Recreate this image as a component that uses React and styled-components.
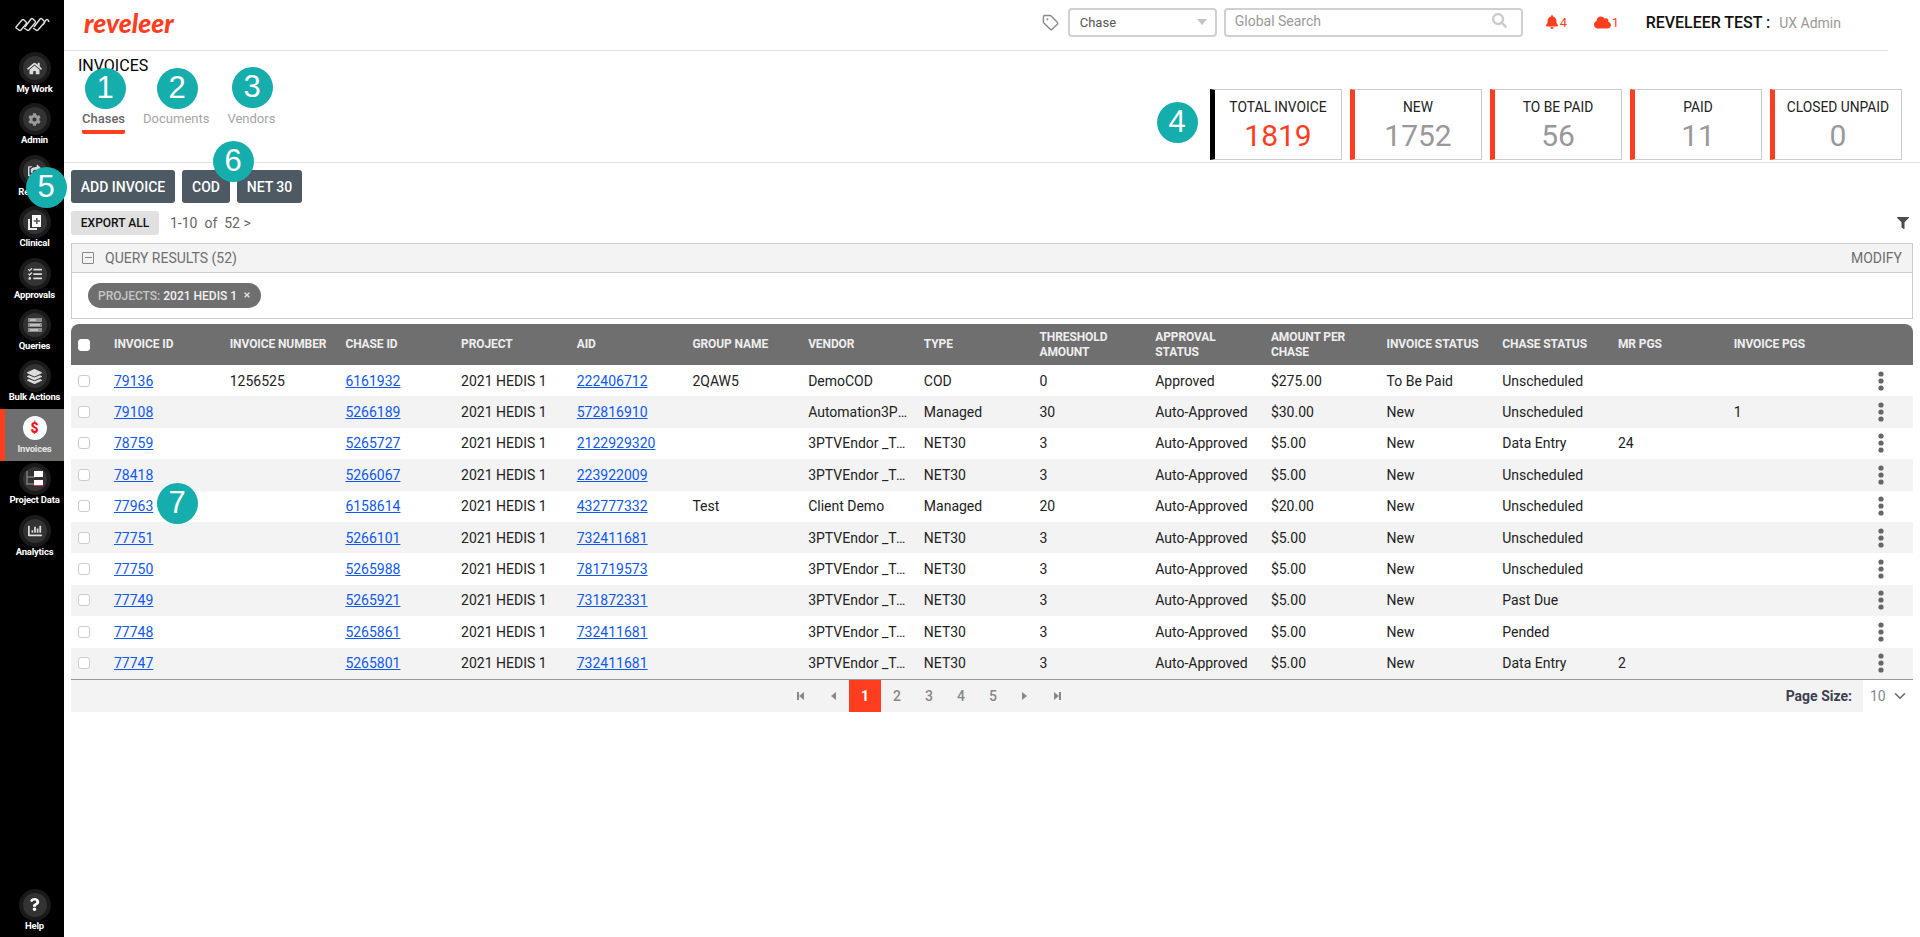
import styled, { createGlobalStyle } from "styled-components";
import { FaHome, FaCog, FaShareSquare, FaTasks, FaLayerGroup, FaChartBar, FaQuestion, FaBell, FaCloud, FaSearch, FaFilter, FaTimes } from "react-icons/fa";
import { LuTag, LuChevronDown } from "react-icons/lu";

const GlobalStyle = createGlobalStyle`
  html, body { margin: 0; padding: 0; background: #fff; }
  body { font-family: Roboto, "Liberation Sans", sans-serif; overflow: hidden; }
  * { box-sizing: border-box; }
`;

const Page = styled.div`
  position: relative;
  display: flex;
  width: 1920px;
  height: 937px;
  overflow: hidden;
`;

const Sidebar = styled.nav`
  width: 64px;
  flex: none;
  height: 100%;
  background: #000;
  display: flex;
  flex-direction: column;
`;

const SideLogo = styled.div`
  height: 49px;
  flex: none;
  display: flex;
  align-items: flex-start;
  justify-content: center;
  padding-top: 16px;
`;

const SideItem = styled.div`
  height: ${(p) => (p.$active ? "52px" : "51.4px")};
  margin-bottom: ${(p) => (p.$active ? "-0.6px" : "0")};
  margin-top: ${(p) => (p.$bottom ? "auto" : "0")};
  padding-top: 3px;
  padding-left: ${(p) => (p.$active ? "0" : "5px")};
  flex: none;
  display: flex;
  flex-direction: column;
  align-items: center;
  background: ${(p) => (p.$active ? "#6f6f6f" : "transparent")};
  border-left: ${(p) => (p.$active ? "5px solid #ff3d1f" : "0")};
`;

const SideCircle = styled.div`
  width: 32px;
  height: 32px;
  flex: none;
  border-radius: 50%;
  background: ${(p) => (p.$active ? "transparent" : "#1a1a1a")};
  display: flex;
  align-items: center;
  justify-content: center;
`;

const SideInner = styled.div`
  width: 24px;
  height: 24px;
  border-radius: 50%;
  background: ${(p) => (p.$active ? "#fff" : "#333")};
  color: ${(p) => (p.$active ? "#f01818" : "#dcdcdc")};
  font-size: 14px;
  font-weight: 900;
  display: flex;
  align-items: center;
  justify-content: center;
`;

const SideLabel = styled.span`
  font-size: 9.5px;
  line-height: 12px;
  font-weight: 700;
  letter-spacing: -0.2px;
  color: ${(p) => (p.$active ? "#e6e6e6" : "#fff")};
  white-space: nowrap;
  margin-top: -1px;
`;

const Main = styled.div`
  flex: 1;
  min-width: 0;
  display: flex;
  flex-direction: column;
`;

const TopBar = styled.header`
  height: 51px;
  flex: none;
  margin-right: 32px;
  border-bottom: 1px solid #e2e2e2;
  display: flex;
  align-items: flex-start;
  padding-left: 20px;
`;

const Logo = styled.div`
  font-family: Lato, "Open Sans", sans-serif;
  font-size: 26.5px;
  line-height: 30px;
  font-weight: 900;
  font-style: italic;
  color: #ff3d1f;
  margin-top: 8px;
`;

const TopTools = styled.div`
  margin-left: auto;
  display: flex;
  align-items: center;
  height: 44px;
`;

const TagIcon = styled(LuTag)`
  width: 17px;
  height: 17px;
  color: #8a8a8a;
  margin-right: 9px;
`;

const SelectBox = styled.div`
  width: 149px;
  height: 29px;
  border: 2px solid #d0d0d0;
  border-radius: 4px;
  display: flex;
  align-items: center;
  justify-content: space-between;
  padding: 0 8px 0 10px;
  font-size: 13px;
  color: #555;
  margin-right: 7px;
`;

const Caret = styled.span`
  width: 0;
  height: 0;
  border-left: 5px solid transparent;
  border-right: 5px solid transparent;
  border-top: 6px solid #c4c4c4;
`;

const SearchBox = styled.div`
  width: 299px;
  height: 29px;
  border: 2px solid #d0d0d0;
  border-radius: 4px;
  display: flex;
  align-items: center;
  justify-content: space-between;
  padding: 0 14px 3px 9px;
  font-size: 14px;
  color: #999;
  margin-right: 22px;
`;

const Alert = styled.span`
  display: flex;
  align-items: center;
  gap: 1px;
  font-size: 13px;
  color: #ff3d1f;
  width: ${(p) => p.$w}px;
`;

const UserName = styled.span`
  font-size: 16px;
  font-weight: 500;
  letter-spacing: -0.03px;
  color: #111;
  margin-left: 4px;
  white-space: nowrap;
`;

const UserRole = styled.span`
  font-size: 14px;
  color: #999;
  margin-left: 9px;
  margin-right: 47px;
  padding-top: 2px;
  white-space: nowrap;
`;

const HeadSection = styled.section`
  height: 112px;
  flex: none;
  border-bottom: 1px solid #e2e2e2;
  display: flex;
  justify-content: space-between;
  padding: 0 18px 2px 14px;
`;

const Title = styled.h1`
  font-size: 16px;
  line-height: 20px;
  font-weight: 400;
  color: #000;
  margin: 5px 0 0;
`;

const Tabs = styled.div`
  display: flex;
  gap: 18px;
  margin: 35px 0 0 4px;
`;

const Tab = styled.div`
  font-size: 13px;
  line-height: 16px;
  padding-bottom: 3px;
  font-weight: ${(p) => (p.$active ? 500 : 400)};
  color: ${(p) => (p.$active ? "#666" : "#a5a5a5")};
  border-bottom: 4px solid ${(p) => (p.$active ? "#ff3d1f" : "transparent")};
  border-radius: 2px;
`;

const Stats = styled.div`
  display: flex;
  gap: 8px;
  align-self: flex-end;
`;

const StatCard = styled.div`
  width: 132px;
  height: 71px;
  border: 1px solid #ccc;
  border-left: 5px solid ${(p) => (p.$dark ? "#000" : "#ff3d1f")};
  display: flex;
  flex-direction: column;
  align-items: center;
  padding-top: 8px;
`;

const StatLabel = styled.div`
  font-size: 13.8px;
  line-height: 18px;
  color: #222;
  white-space: nowrap;
`;

const StatValue = styled.div`
  font-size: 30px;
  line-height: 34px;
  margin-top: 3px;
  color: ${(p) => (p.$dark ? "#ff3d1f" : "#999")};
`;

const Body = styled.div`
  padding: 7px 7px 0;
  display: flex;
  flex-direction: column;
`;

const ActionRow = styled.div`
  display: flex;
  gap: 7px;
`;

const ActionButton = styled.button`
  width: ${(p) => p.$w}px;
  height: 33px;
  padding: 0;
  border: 0;
  border-radius: 3px;
  background: #4d5963;
  color: #fff;
  font-family: inherit;
  font-size: 14px;
  font-weight: 500;
`;

const ExportRow = styled.div`
  display: flex;
  align-items: center;
  margin-top: 8px;
  height: 24px;
`;

const ExportButton = styled.button`
  width: 88px;
  height: 24px;
  padding: 0;
  border: 0;
  border-radius: 3px;
  background: #e0e0e0;
  color: #111;
  font-family: inherit;
  font-size: 12px;
  font-weight: 500;
`;

const PageCount = styled.span`
  font-size: 14px;
  color: #666;
  margin-left: 11px;
`;

const FilterIcon = styled(FaFilter)`
  width: 12px;
  height: 12px;
  color: #4d4d4d;
  margin-left: auto;
  margin-right: 4px;
`;

const QueryBox = styled.section`
  margin-top: 8px;
  height: 76px;
  border: 1px solid #ccc;
`;

const QueryHead = styled.div`
  height: 29px;
  background: #f3f3f3;
  border-bottom: 1px solid #ccc;
  display: flex;
  align-items: center;
  padding: 0 10px;
  font-size: 14px;
  color: #6f6f6f;
`;

const Collapse = styled.span`
  position: relative;
  width: 12px;
  height: 12px;
  border: 1.5px solid #888;
  border-radius: 1px;
  margin-right: 11px;
  &::after {
    content: "";
    position: absolute;
    left: 1.5px;
    right: 1.5px;
    top: 3.5px;
    height: 1.5px;
    background: #888;
  }
`;

const Modify = styled.span`
  margin-left: auto;
`;

const QueryBodyRow = styled.div`
  padding: 10px 16px;
`;

const Pill = styled.span`
  display: inline-flex;
  align-items: center;
  height: 25px;
  padding: 0 10px;
  border-radius: 13px;
  background: #6f6f6f;
  font-size: 12px;
  font-weight: 500;
  color: #f2f2f2;
  white-space: nowrap;
`;

const PillKey = styled.span`
  color: #c6c6c6;
  margin-right: 3px;
`;

const PillClose = styled(FaTimes)`
  width: 8px;
  height: 8px;
  color: #ddd;
  margin: 0 0 2px 6px;
`;

const GRID = "35px repeat(15, 115.7px) 1fr";

const TableHead = styled.div`
  margin-top: 5px;
  height: 41px;
  display: grid;
  grid-template-columns: ${GRID};
  align-items: center;
  background: #6f6f6f;
  border-radius: 8px 8px 0 0;
`;

const HeadCell = styled.div`
  padding: 0 8px;
  font-size: 12px;
  line-height: 14.5px;
  font-weight: 700;
  letter-spacing: -0.1px;
  color: #eee;
`;

const TableRow = styled.div`
  height: 31.4px;
  display: grid;
  grid-template-columns: ${GRID};
  align-items: center;
  background: ${(p) => (p.$alt ? "#f3f3f3" : "#fff")};
`;

const Cell = styled.div`
  padding: 0 8px;
  font-size: 14px;
  color: #222;
  white-space: nowrap;
  overflow: hidden;
  text-overflow: ellipsis;
`;

const IdLink = styled.a`
  color: #0f58f0;
  text-decoration: underline;
`;

const CheckCell = styled.div`
  padding-left: 7px;
  display: flex;
  align-items: center;
`;

const Check = styled.span`
  width: 12px;
  height: 12px;
  border: 1px solid ${(p) => (p.$head ? "#fff" : "#ccc")};
  border-radius: 3px;
  background: #fff;
`;

const DotsCell = styled.div`
  display: flex;
  padding-left: 37px;
`;

const Pager = styled.div`
  height: 33px;
  background: #f3f3f3;
  border-top: 1px solid #999;
  display: flex;
  align-items: stretch;
  padding-left: 714px;
`;

const PageBtn = styled.span`
  width: 32px;
  display: flex;
  align-items: center;
  justify-content: center;
  font-size: 14px;
  font-weight: ${(p) => (p.$active ? 700 : 500)};
  background: ${(p) => (p.$active ? "#ff3d1f" : "transparent")};
  color: ${(p) => (p.$active ? "#fff" : "#888")};
`;

const PageSizeWrap = styled.div`
  margin-left: auto;
  display: flex;
  align-items: center;
`;

const PageSizeLabel = styled.span`
  font-size: 14px;
  font-weight: 700;
  color: #3d4150;
  margin-right: 11px;
`;

const PageSizeBox = styled.div`
  width: 50px;
  height: 100%;
  background: #fff;
  display: flex;
  align-items: center;
  justify-content: space-between;
  padding: 0 4px 0 7px;
  font-size: 14px;
  color: #7f8896;
`;

const Badge = styled.span`
  position: absolute;
  left: ${(p) => p.$x - 20.5}px;
  top: ${(p) => p.$y - 20.5}px;
  width: 41px;
  height: 41px;
  border-radius: 50%;
  background: #16adad;
  color: #fff;
  font-family: "Liberation Sans", sans-serif;
  font-size: 31px;
  display: flex;
  align-items: center;
  justify-content: center;
`;

const ClinicalIcon = () => (
  <svg width="15" height="15" viewBox="0 0 15 15">
    <path d="M1 4h2v9h7v2H1z" fill="#e8e8e8" />
    <path d="M5 0h9v12H5z" fill="#fff" />
    <path d="M9 3h1.6v2.2H13v1.500h-2.400V9H9V6.700H6.700V5.200H9z" fill="#555" />
  </svg>
);

const QueriesIcon = () => (
  <svg width="14" height="14" viewBox="0 0 14 14">
    <path d="M0 0h14v4H0zM0 5h14v4H0zM0 10h14v4H0z" fill="#8c8c8c" />
    <path d="M2 1.500h6v1H2zM2 6.500h10v1H2zM2 11.500h8v1H2z" fill="#f2f2f2" />
  </svg>
);

const ProjectDataIcon = () => (
  <svg width="18" height="16" viewBox="0 0 18 16">
    <path d="M1 0v13h8M1 6h8" fill="none" stroke="#7c7c7c" strokeWidth="1.500" />
    <path d="M8 0h9v6H8z" fill="#fff" />
    <path d="M8 9h9v6H8z" fill="#fff" />
    <path d="M8 14h9v1H8z" fill="#e34" />
  </svg>
);

const SideLogoMark = () => (
  <svg width="36" height="17" viewBox="0 0 36 17" fill="none" stroke="#e0e0e0" strokeWidth="1.400">
    <path d="M2 11 L8 4 Q9 3 10 4 L12 6 Q13 7 12 8 L7 14 Q6 15 5 14 L2 12 Z" />
    <path d="M11 11 L17 3 Q18 2 19 3 L21 5 Q22 6 21 7 L15 14 Q14 15 13 14 L10 12" />
    <path d="M20 11 L26 3 Q27 2 28 3 L30 5 Q31 6 30 7 L24 14 Q23 15 22 14 L19 12" />
    <path d="M29 9 L32 4 Q33 3 34 4 L35 6" />
  </svg>
);

const Dots = () => (
  <svg width="6" height="20" viewBox="0 0 6 20" fill="#666">
    <circle cx="3" cy="3" r="2.600" />
    <circle cx="3" cy="10" r="2.600" />
    <circle cx="3" cy="17" r="2.600" />
  </svg>
);

const PagerIcon = ({ dir, edge }) => (
  <svg width="10" height="10" viewBox="0 0 10 10" fill="#888">
    {dir === "left" ? <path d="M8 1v8L3 5z" /> : <path d="M2 1v8l5-4z" />}
    {edge && (dir === "left" ? <path d="M1 1h2v8H1z" /> : <path d="M7 1h2v8H7z" />)}
  </svg>
);

const sideItems = [
  { label: "My Work", icon: <FaHome size={15} /> },
  { label: "Admin", icon: <FaCog size={13} color="#9a9a9a" /> },
  { label: "Reports", icon: <FaShareSquare size={13} /> },
  { label: "Clinical", icon: <ClinicalIcon /> },
  { label: "Approvals", icon: <FaTasks size={14} /> },
  { label: "Queries", icon: <QueriesIcon /> },
  { label: "Bulk Actions", icon: <FaLayerGroup size={15} /> },
  { label: "Invoices", icon: "$", active: true },
  { label: "Project Data", icon: <ProjectDataIcon /> },
  { label: "Analytics", icon: <FaChartBar size={14} /> },
];

const stats = [
  { label: "TOTAL INVOICE", value: 1819, dark: true },
  { label: "NEW", value: 1752 },
  { label: "TO BE PAID", value: 56 },
  { label: "PAID", value: 11 },
  { label: "CLOSED UNPAID", value: 0 },
];

const columns = [
  "INVOICE ID", "INVOICE NUMBER", "CHASE ID", "PROJECT", "AID", "GROUP NAME", "VENDOR", "TYPE",
  "THRESHOLD AMOUNT", "APPROVAL STATUS", "AMOUNT PER CHASE", "INVOICE STATUS", "CHASE STATUS", "MR PGS", "INVOICE PGS",
];

const VENDOR = "3PTVEndor _Test";

const rows = [
  ["79136", "1256525", "6161932", "222406712", "2QAW5", "DemoCOD", "COD", "0", "Approved", "$275.00", "To Be Paid", "Unscheduled", "", ""],
  ["79108", "", "5266189", "572816910", "", "Automation3PTV", "Managed", "30", "Auto-Approved", "$30.00", "New", "Unscheduled", "", "1"],
  ["78759", "", "5265727", "2122929320", "", VENDOR, "NET30", "3", "Auto-Approved", "$5.00", "New", "Data Entry", "24", ""],
  ["78418", "", "5266067", "223922009", "", VENDOR, "NET30", "3", "Auto-Approved", "$5.00", "New", "Unscheduled", "", ""],
  ["77963", "", "6158614", "432777332", "Test", "Client Demo", "Managed", "20", "Auto-Approved", "$20.00", "New", "Unscheduled", "", ""],
  ["77751", "", "5266101", "732411681", "", VENDOR, "NET30", "3", "Auto-Approved", "$5.00", "New", "Unscheduled", "", ""],
  ["77750", "", "5265988", "781719573", "", VENDOR, "NET30", "3", "Auto-Approved", "$5.00", "New", "Unscheduled", "", ""],
  ["77749", "", "5265921", "731872331", "", VENDOR, "NET30", "3", "Auto-Approved", "$5.00", "New", "Past Due", "", ""],
  ["77748", "", "5265861", "732411681", "", VENDOR, "NET30", "3", "Auto-Approved", "$5.00", "New", "Pended", "", ""],
  ["77747", "", "5265801", "732411681", "", VENDOR, "NET30", "3", "Auto-Approved", "$5.00", "New", "Data Entry", "2", ""],
];

const badges = [
  { n: 1, x: 105, y: 88 },
  { n: 2, x: 177, y: 88 },
  { n: 3, x: 252, y: 87 },
  { n: 4, x: 1177, y: 122 },
  { n: 5, x: 46, y: 187 },
  { n: 6, x: 233, y: 161 },
  { n: 7, x: 177, y: 503 },
];

const SideEntry = ({ item, bottom }) => (
  <SideItem $active={item.active} $bottom={bottom}>
    <SideCircle $active={item.active}>
      <SideInner $active={item.active}>{item.icon}</SideInner>
    </SideCircle>
    <SideLabel $active={item.active}>{item.label}</SideLabel>
  </SideItem>
);

const App = () => {
  return (
    <Page>
      <GlobalStyle />
      <Sidebar>
        <SideLogo>
          <SideLogoMark />
        </SideLogo>
        {sideItems.map((item) => (
          <SideEntry key={item.label} item={item} />
        ))}
        <SideEntry bottom item={{ label: "Help", icon: <FaQuestion size={13} color="#fff" /> }} />
      </Sidebar>
      <Main>
        <TopBar>
          <Logo>reveleer</Logo>
          <TopTools>
            <TagIcon />
            <SelectBox>
              Chase
              <Caret />
            </SelectBox>
            <SearchBox>
              Global Search
              <FaSearch size={15} color="#ccc" />
            </SearchBox>
            <Alert $w={49}>
              <FaBell size={14} />4
            </Alert>
            <Alert $w={48}>
              <FaCloud size={17} />1
            </Alert>
            <UserName>REVELEER TEST :</UserName>
            <UserRole>UX Admin</UserRole>
          </TopTools>
        </TopBar>
        <HeadSection>
          <div>
            <Title>INVOICES</Title>
            <Tabs>
              <Tab $active>Chases</Tab>
              <Tab>Documents</Tab>
              <Tab>Vendors</Tab>
            </Tabs>
          </div>
          <Stats>
            {stats.map((s) => (
              <StatCard key={s.label} $dark={s.dark}>
                <StatLabel>{s.label}</StatLabel>
                <StatValue $dark={s.dark}>{s.value}</StatValue>
              </StatCard>
            ))}
          </Stats>
        </HeadSection>
        <Body>
          <ActionRow>
            <ActionButton $w={104}>ADD INVOICE</ActionButton>
            <ActionButton $w={48}>COD</ActionButton>
            <ActionButton $w={65}>NET 30</ActionButton>
          </ActionRow>
          <ExportRow>
            <ExportButton>EXPORT ALL</ExportButton>
            <PageCount>1-10&nbsp;&nbsp;of&nbsp;&nbsp;52 &gt;</PageCount>
            <FilterIcon />
          </ExportRow>
          <QueryBox>
            <QueryHead>
              <Collapse />
              QUERY RESULTS (52)
              <Modify>MODIFY</Modify>
            </QueryHead>
            <QueryBodyRow>
              <Pill>
                <PillKey>PROJECTS:</PillKey>2021 HEDIS 1
                <PillClose />
              </Pill>
            </QueryBodyRow>
          </QueryBox>
          <TableHead>
            <CheckCell>
              <Check $head />
            </CheckCell>
            {columns.map((c) => (
              <HeadCell key={c}>{c}</HeadCell>
            ))}
          </TableHead>
          {rows.map((r, i) => (
            <TableRow key={r[0]} $alt={i % 2 === 1}>
              <CheckCell>
                <Check />
              </CheckCell>
              <Cell>
                <IdLink href="#">{r[0]}</IdLink>
              </Cell>
              <Cell>{r[1]}</Cell>
              <Cell>
                <IdLink href="#">{r[2]}</IdLink>
              </Cell>
              <Cell>2021 HEDIS 1</Cell>
              <Cell>
                <IdLink href="#">{r[3]}</IdLink>
              </Cell>
              {r.slice(4).map((v, j) => (
                <Cell key={j}>{v}</Cell>
              ))}
              <DotsCell>
                <Dots />
              </DotsCell>
            </TableRow>
          ))}
          <Pager>
            <PageBtn><PagerIcon dir="left" edge /></PageBtn>
            <PageBtn><PagerIcon dir="left" /></PageBtn>
            <PageBtn $active>1</PageBtn>
            <PageBtn>2</PageBtn>
            <PageBtn>3</PageBtn>
            <PageBtn>4</PageBtn>
            <PageBtn>5</PageBtn>
            <PageBtn><PagerIcon dir="right" /></PageBtn>
            <PageBtn><PagerIcon dir="right" edge /></PageBtn>
            <PageSizeWrap>
              <PageSizeLabel>Page Size:</PageSizeLabel>
              <PageSizeBox>
                10
                <LuChevronDown size={18} color="#666" />
              </PageSizeBox>
            </PageSizeWrap>
          </Pager>
        </Body>
      </Main>
      {badges.map((b) => (
        <Badge key={b.n} $x={b.x} $y={b.y}>
          {b.n}
        </Badge>
      ))}
    </Page>
  );
};

export default App;
